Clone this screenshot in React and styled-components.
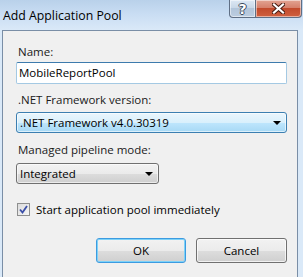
import React from "react";
import styled, { createGlobalStyle } from "styled-components";

const Global = createGlobalStyle`
  html, body { margin: 0; padding: 0; }
  body {
    width: 303px;
    height: 277px;
    overflow: hidden;
    font-family: "Open Sans", "Noto Sans", sans-serif;
    font-size: 11.5px;
    color: #000;
  }
`;

const Window = styled.div`
  width: 303px;
  height: 277px;
  display: flex;
  flex-direction: column;
  background: linear-gradient(to bottom, #b9d1ea 0px, #c9ddf3 14px, #dae9f8 30px, #dae9f8 100%);
`;

const TitleBar = styled.div`
  height: 30px;
  display: flex;
  align-items: flex-start;
  justify-content: space-between;
  flex-shrink: 0;
`;

const Title = styled.div`
  padding: 7px 0 0 3px;
  font-size: 12.3px;
  color: #000;
`;

const CaptionButtons = styled.div`
  display: flex;
  margin-right: 1px;
`;

const CaptionButton = styled.div`
  height: 18px;
  width: ${(p) => p.$w}px;
  display: flex;
  align-items: center;
  justify-content: center;
  box-sizing: border-box;
  border: 1px solid #5f6f85;
  border-top: none;
  background: ${(p) =>
    p.$close
      ? "linear-gradient(to bottom, #e2a493 0%, #d6806b 45%, #c24a2c 50%, #d0603f 100%)"
      : "linear-gradient(to bottom, #dde8f4 0%, #c9d8e8 45%, #b2c5da 50%, #bccde0 100%)"};
  border-radius: ${(p) => (p.$close ? "0 0 4px 0" : "0 0 0 4px")};
  box-shadow: inset 0 0 0 1px rgba(255, 255, 255, 0.5);
  & + & { border-left: none; }
`;

const HelpGlyph = styled.span`
  font-family: "DejaVu Sans", sans-serif;
  font-weight: bold;
  font-size: 14px;
  line-height: 1;
  color: #fff;
  text-shadow: 1px 0 #3b4a5c, -1px 0 #3b4a5c, 0 1px #3b4a5c, 0 -1px #3b4a5c;
`;

const Client = styled.div`
  flex: 1;
  margin: 0 5px 0 2px;
  border: 1px solid #7a8ea6;
  border-bottom: none;
  background: #f0f0f0;
  padding: 13px 10px 0 13px;
  display: flex;
  flex-direction: column;
`;

const Label = styled.div`
  height: 15px;
  line-height: 15px;
  padding-left: 2px;
  margin-top: ${(p) => p.$mt || 0}px;
  color: #1a1a1a;
`;

const TextBox = styled.div`
  margin-top: 3px;
  height: 22px;
  box-sizing: border-box;
  border: 1px solid #a4c9e3;
  border-top-color: #3d7bad;
  background: #fff;
  border-radius: 2px;
  padding-left: 2px;
  line-height: 20px;
`;

const Select = styled.div`
  margin-top: ${(p) => p.$mt}px;
  width: ${(p) => (p.$w ? p.$w + "px" : "auto")};
  height: 21px;
  box-sizing: border-box;
  border: 1px solid ${(p) => (p.$focus ? "#3c7fb1" : "#707070")};
  border-radius: 3px;
  background: ${(p) =>
    p.$focus
      ? "linear-gradient(to bottom, #eaf6fd 0%, #d9f0fc 50%, #bee6fd 51%, #a7d9f5 100%)"
      : "linear-gradient(to bottom, #f2f2f2 0%, #ebebeb 50%, #dddddd 51%, #cfcfcf 100%)"};
  box-shadow: inset 0 0 0 1px rgba(255, 255, 255, 0.6);
  display: flex;
  align-items: center;
  justify-content: space-between;
  padding: 0 5px 0 3px;
`;

const Arrow = styled.span`
  width: 0;
  height: 0;
  border-left: 4px solid transparent;
  border-right: 4px solid transparent;
  border-top: 4px solid #000;
`;

const CheckRow = styled.div`
  margin-top: 19px;
  display: flex;
  align-items: center;
  gap: 6px;
  padding-left: 1px;
  height: 13px;
`;

const CheckBox = styled.div`
  width: 13px;
  height: 13px;
  box-sizing: border-box;
  border: 1px solid #8e8f8f;
  background: linear-gradient(135deg, #dcdcdc 0%, #f6f6f6 100%);
  display: flex;
  align-items: center;
  justify-content: center;
  flex-shrink: 0;
`;

const Buttons = styled.div`
  margin-top: 22px;
  display: flex;
  justify-content: flex-end;
  gap: 10px;
`;

const Button = styled.div`
  width: ${(p) => p.$w}px;
  height: 25px;
  box-sizing: border-box;
  border: 1px solid ${(p) => (p.$default ? "#3c9be0" : "#707070")};
  border-radius: 3px;
  background: linear-gradient(to bottom, #f2f2f2 0%, #ebebeb 50%, #dddddd 51%, #cfcfcf 100%);
  box-shadow: ${(p) =>
    p.$default ? "inset 0 0 0 1px #7ed2f8" : "inset 0 0 0 1px rgba(255,255,255,0.7)"};
  display: flex;
  align-items: center;
  justify-content: center;
`;

export default function App() {
  return (
    <>
      <Global />
      <Window>
        <TitleBar>
          <Title>Add Application Pool</Title>
          <CaptionButtons>
            <CaptionButton $w={27}>
              <HelpGlyph>?</HelpGlyph>
            </CaptionButton>
            <CaptionButton $w={46} $close>
              <svg width="13" height="11" viewBox="0 0 13 11">
                <path d="M2 1.5 L11 9.5 M11 1.5 L2 9.5" stroke="#4a1d12" strokeWidth="4.2" strokeLinecap="square" />
                <path d="M2 1.5 L11 9.5 M11 1.5 L2 9.5" stroke="#fff" strokeWidth="2.2" strokeLinecap="square" />
              </svg>
            </CaptionButton>
          </CaptionButtons>
        </TitleBar>
        <Client>
          <Label>Name:</Label>
          <TextBox>MobileReportPool</TextBox>
          <Label $mt={8}>.NET Framework version:</Label>
          <Select $mt={5} $focus>
            <span>.NET Framework v4.0.30319</span>
            <Arrow />
          </Select>
          <Label $mt={9}>Managed pipeline mode:</Label>
          <Select $mt={6} $w={143}>
            <span>Integrated</span>
            <Arrow />
          </Select>
          <CheckRow>
            <CheckBox>
              <svg width="9" height="9" viewBox="0 0 9 9">
                <path d="M1 4.5 L3.5 7.5 L8 1" fill="none" stroke="#3b4fa8" strokeWidth="1.8" />
              </svg>
            </CheckBox>
            <span>Start application pool immediately</span>
          </CheckRow>
          <Buttons>
            <Button $w={90} $default>OK</Button>
            <Button $w={91}>Cancel</Button>
          </Buttons>
        </Client>
      </Window>
    </>
  );
}
